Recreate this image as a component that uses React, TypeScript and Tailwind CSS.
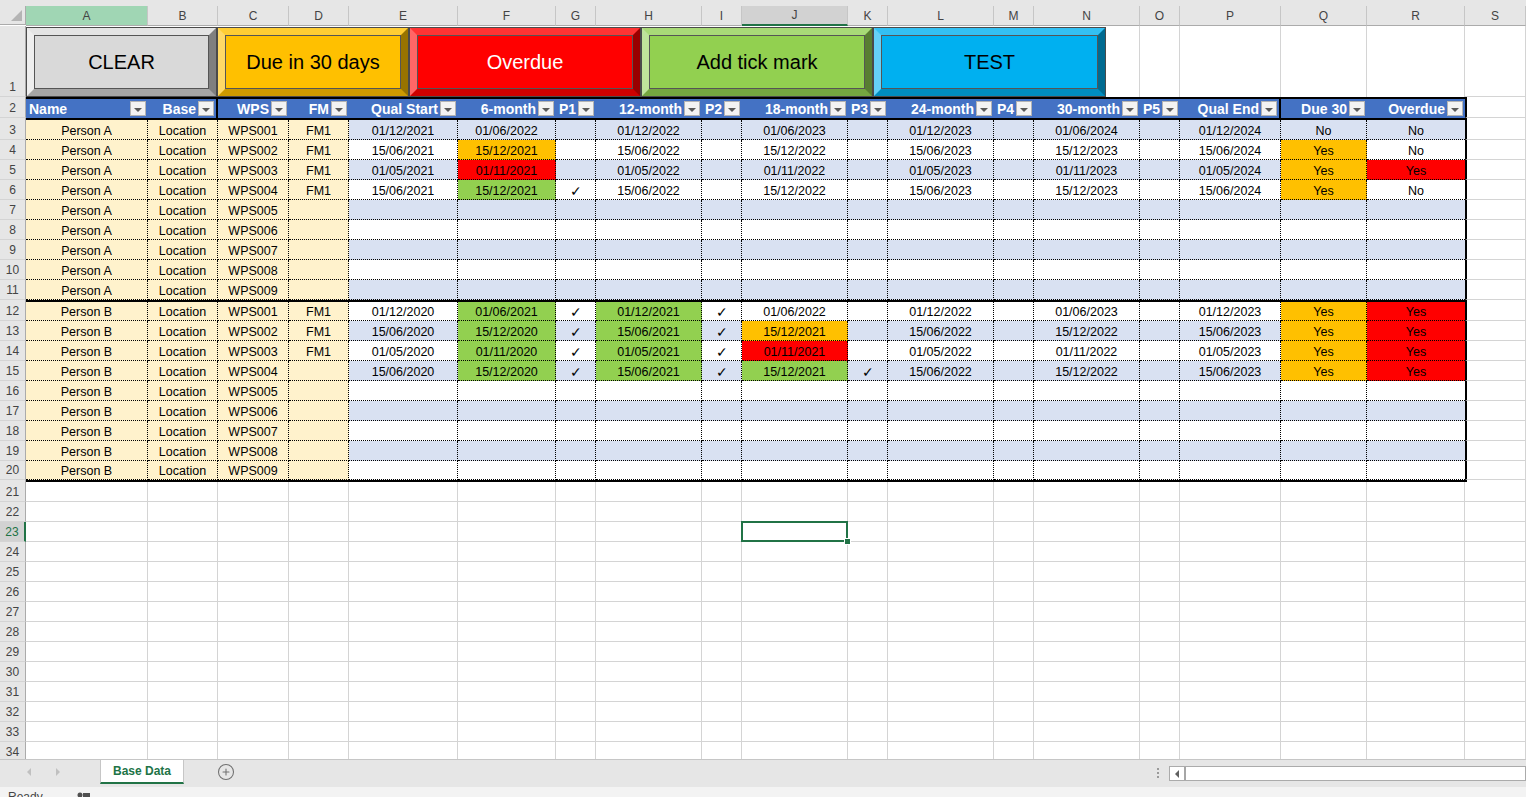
import { CirclePlus } from "lucide-react";

// Excel-style sheet: fixed column widths taken from the screenshot
const GRID =
  "grid grid-cols-[26px_122px_70px_71px_60px_109px_98px_40px_106px_40px_106px_40px_106px_40px_106px_40px_101px_86px_98px_1fr]";
const LETTERS = "ABCDEFGHIJKLMNOPQRS".split("");
const HEADERS = [
  "Name", "Base", "WPS", "FM", "Qual Start", "6-month", "P1", "12-month", "P2",
  "18-month", "P3", "24-month", "P4", "30-month", "P5", "Qual End", "Due 30", "Overdue",
];

type Fill = "a" | "r" | "g";
type Row = { n: number; v: string[]; f?: Record<number, Fill> };

const blank = (who: string, wps: string) => [who, "Location", wps, "", "", "", "", "", "", "", "", "", "", "", "", "", "", ""];

const ROWS: Row[] = [
  { n: 3, v: ["Person A", "Location", "WPS001", "FM1", "01/12/2021", "01/06/2022", "", "01/12/2022", "", "01/06/2023", "", "01/12/2023", "", "01/06/2024", "", "01/12/2024", "No", "No"] },
  { n: 4, v: ["Person A", "Location", "WPS002", "FM1", "15/06/2021", "15/12/2021", "", "15/06/2022", "", "15/12/2022", "", "15/06/2023", "", "15/12/2023", "", "15/06/2024", "Yes", "No"], f: { 5: "a", 16: "a" } },
  { n: 5, v: ["Person A", "Location", "WPS003", "FM1", "01/05/2021", "01/11/2021", "", "01/05/2022", "", "01/11/2022", "", "01/05/2023", "", "01/11/2023", "", "01/05/2024", "Yes", "Yes"], f: { 5: "r", 16: "a", 17: "r" } },
  { n: 6, v: ["Person A", "Location", "WPS004", "FM1", "15/06/2021", "15/12/2021", "✓", "15/06/2022", "", "15/12/2022", "", "15/06/2023", "", "15/12/2023", "", "15/06/2024", "Yes", "No"], f: { 5: "g", 16: "a" } },
  { n: 7, v: blank("Person A", "WPS005") },
  { n: 8, v: blank("Person A", "WPS006") },
  { n: 9, v: blank("Person A", "WPS007") },
  { n: 10, v: blank("Person A", "WPS008") },
  { n: 11, v: blank("Person A", "WPS009") },
];

const ROWS_B: Row[] = [
  { n: 12, v: ["Person B", "Location", "WPS001", "FM1", "01/12/2020", "01/06/2021", "✓", "01/12/2021", "✓", "01/06/2022", "", "01/12/2022", "", "01/06/2023", "", "01/12/2023", "Yes", "Yes"], f: { 5: "g", 7: "g", 16: "a", 17: "r" } },
  { n: 13, v: ["Person B", "Location", "WPS002", "FM1", "15/06/2020", "15/12/2020", "✓", "15/06/2021", "✓", "15/12/2021", "", "15/06/2022", "", "15/12/2022", "", "15/06/2023", "Yes", "Yes"], f: { 5: "g", 7: "g", 9: "a", 16: "a", 17: "r" } },
  { n: 14, v: ["Person B", "Location", "WPS003", "FM1", "01/05/2020", "01/11/2020", "✓", "01/05/2021", "✓", "01/11/2021", "", "01/05/2022", "", "01/11/2022", "", "01/05/2023", "Yes", "Yes"], f: { 5: "g", 7: "g", 9: "r", 16: "a", 17: "r" } },
  { n: 15, v: ["Person B", "Location", "WPS004", "", "15/06/2020", "15/12/2020", "✓", "15/06/2021", "✓", "15/12/2021", "✓", "15/06/2022", "", "15/12/2022", "", "15/06/2023", "Yes", "Yes"], f: { 5: "g", 7: "g", 9: "g", 16: "a", 17: "r" } },
  { n: 16, v: blank("Person B", "WPS005") },
  { n: 17, v: blank("Person B", "WPS006") },
  { n: 18, v: blank("Person B", "WPS007") },
  { n: 19, v: blank("Person B", "WPS008") },
  { n: 20, v: blank("Person B", "WPS009") },
];

function RowHead({ n, tall = "h-[20px]" }: { n: number; tall?: string }) {
  const active = n === 23;
  return (
    <div
      className={`${tall} flex items-end justify-center pb-[2px] text-[12px] leading-[14px] border-b border-b-[#d4d4d4] ${
        active ? "bg-[#d2d2d2] text-[#217346] border-r-2 border-r-[#217346]" : "bg-[#e6e6e6] text-[#444] border-r border-r-[#ababab]"
      }`}
    >
      {n}
    </div>
  );
}

function Rule() {
  return (
    <div className={GRID}>
      <div className="h-[2px] bg-[#e6e6e6] border-r border-r-[#ababab]" />
      <div className="col-span-18 bg-black" />
      <div className="bg-white border-l-2 border-l-black border-r border-r-[#d4d4d4]" />
    </div>
  );
}

function Drop() {
  return (
    <span className="w-[16px] h-[15px] shrink-0 bg-[#f3f3f3] border border-[#b4b4b4] flex items-center justify-center">
      <span className="w-0 h-0 mt-[2px] border-x-[4px] border-x-transparent border-t-[4px] border-t-[#595959]" />
    </span>
  );
}

type BevelProps = { w: string; face: string; bevel: string; text: string; label: string };

function Bevel({ w, face, bevel, text, label }: BevelProps) {
  return (
    <div className={`${w} h-[70px] border border-[#4a4a4a] flex`}>
      <div className={`flex-1 flex border-[7px] ${bevel}`}>
        <div className={`flex-1 flex items-center justify-center border border-[#555] text-[20px] ${face} ${text}`}>{label}</div>
      </div>
    </div>
  );
}

function DataRow({ r }: { r: Row }) {
  const band = r.n % 2 === 1;
  const tall = r.n === 12 || r.n === 20 ? "h-[19px]" : "h-[20px]";
  return (
    <div className={GRID}>
      <RowHead n={r.n} tall={tall} />
      {r.v.map((v, i) => {
        const f = r.f?.[i];
        const bg =
          i < 4
            ? "bg-[#fff2cc]"
            : f === "a"
            ? "bg-[#ffc000]"
            : f === "r"
            ? "bg-[#ff0000]"
            : f === "g"
            ? "bg-[#92d050]"
            : band
            ? "bg-[#d9e1f2]"
            : "bg-white";
        const edge = i === 17 ? "border-b" : "border-r border-b";
        const type = v === "✓" ? "text-[14px] font-['DejaVu_Sans',sans-serif] font-light" : "text-[12.5px]";
        return (
          <div
            key={i}
            className={`${bg} ${edge} ${type} leading-[15px] pt-[3px] overflow-hidden border-dotted border-black flex items-center justify-center text-black`}
          >
            {v}
          </div>
        );
      })}
      <div className="bg-white border-l-2 border-l-black border-r border-b border-r-[#d4d4d4] border-b-[#d4d4d4]" />
    </div>
  );
}

function EmptyRow({ n }: { n: number }) {
  return (
    <div className={GRID}>
      <RowHead n={n} />
      {LETTERS.map((L, i) => (
        <div key={L} className={`bg-white border-r border-b border-[#d4d4d4] ${n === 23 && i === 9 ? "relative" : ""}`}>
          {n === 23 && i === 9 && (
            <>
              <div className="absolute -inset-[1px] z-10 border-2 border-[#217346]" />
              <div className="absolute -right-[4px] -bottom-[4px] z-20 w-[7px] h-[7px] bg-[#217346] border border-white" />
            </>
          )}
        </div>
      ))}
    </div>
  );
}

export default function App() {
  const empties = Array.from({ length: 14 }, (_, k) => 21 + k);
  return (
    <div className="h-[797px] w-full overflow-hidden flex flex-col bg-white font-['Liberation_Sans',Arial,sans-serif]">
      {/* ── Sheet ── */}
      <div className="h-[759px] overflow-hidden">
        <div className="h-[6px] bg-[#e6e6e6]" />

        {/* column letters */}
        <div className={GRID}>
          <div className="h-[19px] bg-[#e6e6e6] border-r border-b border-[#ababab] flex items-end justify-end p-[3px]">
            <span className="w-0 h-0 border-b-[11px] border-b-[#b4b4b4] border-l-[11px] border-l-transparent" />
          </div>
          {LETTERS.map((L) => (
            <div
              key={L}
              className={`flex items-center justify-center text-[12px] text-[#444] border-r border-r-[#c6c6c6] ${
                L === "A"
                  ? "bg-[#a0d6b4] border-b border-b-[#ababab]"
                  : L === "J"
                  ? "bg-[#d2d2d2] border-b-2 border-b-[#217346]"
                  : "bg-[#e6e6e6] border-b border-b-[#ababab]"
              }`}
            >
              {L}
            </div>
          ))}
        </div>

        {/* row 1 : macro buttons */}
        <div className={GRID}>
          <RowHead n={1} tall="h-[71px]" />
          <div className="col-span-14 bg-white border-r border-r-[#d4d4d4] flex items-start pt-[1px]">
            <Bevel
              w="w-[191px]"
              face="bg-[#d9d9d9]"
              bevel="border-t-[#e4e4e4] border-l-[#eeeeee] border-r-[#7f7f7f] border-b-[#a5a5a5]"
              text="text-black"
              label="CLEAR"
            />
            <Bevel
              w="w-[192px]"
              face="bg-[#ffc000]"
              bevel="border-t-[#ffcd33] border-l-[#ffd966] border-r-[#977300] border-b-[#cc9a00]"
              text="text-black"
              label="Due in 30 days"
            />
            <Bevel
              w="w-[232px]"
              face="bg-[#ff0000]"
              bevel="border-t-[#ff3333] border-l-[#ff6666] border-r-[#990000] border-b-[#cc0000]"
              text="text-white"
              label="Overdue"
            />
            <Bevel
              w="w-[232px]"
              face="bg-[#92d050]"
              bevel="border-t-[#a8da77] border-l-[#bee39b] border-r-[#587d31] border-b-[#74a640]"
              text="text-black"
              label="Add tick mark"
            />
            <Bevel
              w="w-[233px]"
              face="bg-[#00b0f0]"
              bevel="border-t-[#33c0f3] border-l-[#66d0f6] border-r-[#006a90] border-b-[#008dc0]"
              text="text-black"
              label="TEST"
            />
          </div>
          <div className="bg-white border-r border-r-[#d4d4d4]" />
          <div className="bg-white border-r border-r-[#d4d4d4]" />
          <div className="bg-white border-r border-r-[#d4d4d4]" />
          <div className="bg-white border-r border-r-[#d4d4d4]" />
          <div className="bg-white border-r border-b border-[#d4d4d4]" />
        </div>

        <Rule />

        {/* row 2 : table header */}
        <div className={GRID}>
          <RowHead n={2} tall="h-[19px]" />
          {HEADERS.map((h, i) => (
            <div
              key={h}
              className={`bg-[#4472c4] flex items-center gap-[2px] pl-[3px] pr-[2px] text-[14px] leading-[16px] font-bold text-white whitespace-nowrap overflow-hidden ${
                i === 0 ? "justify-between" : "justify-end"
              } ${i === 1 || i === 15 ? "border-r-2 border-r-black" : ""}`}
            >
              {h}
              <Drop />
            </div>
          ))}
          <div className="bg-white border-l-2 border-l-black border-r border-b border-r-[#d4d4d4] border-b-[#d4d4d4]" />
        </div>

        <Rule />
        {ROWS.map((r) => (
          <DataRow key={r.n} r={r} />
        ))}
        <Rule />
        {ROWS_B.map((r) => (
          <DataRow key={r.n} r={r} />
        ))}
        <Rule />
        {empties.map((n) => (
          <EmptyRow key={n} n={n} />
        ))}
      </div>

      {/* ── Sheet tabs ── */}
      <div className="h-[28px] shrink-0 bg-[#e6e6e6] border-t border-t-[#c6c6c6] flex items-start">
        <div className="w-[100px] h-[24px] flex items-center pl-[27px] gap-[25px]">
          <span className="w-0 h-0 border-y-[4px] border-y-transparent border-r-[4px] border-r-[#c0c0c0]" />
          <span className="w-0 h-0 border-y-[4px] border-y-transparent border-l-[4px] border-l-[#c0c0c0]" />
        </div>
        <div className="w-[84px] h-[24px] bg-white border-x border-x-[#c6c6c6] border-b-2 border-b-[#217346] flex items-center justify-center text-[12px] font-bold text-[#217346]">
          Base Data
        </div>
        <div className="h-[24px] flex items-center pl-[33px]">
          <CirclePlus size={18} strokeWidth={1.4} className="text-[#707070]" />
        </div>
        <div className="flex-1" />
        <div className="w-[23px] h-[24px] flex flex-col items-center justify-center gap-[2px] pt-[2px]">
          <span className="w-[2px] h-[2px] bg-[#9a9a9a]" />
          <span className="w-[2px] h-[2px] bg-[#9a9a9a]" />
          <span className="w-[2px] h-[2px] bg-[#9a9a9a]" />
        </div>
        <div className="w-[357px] h-[15px] mt-[6px] bg-white border border-[#ababab] flex items-stretch">
          <div className="w-[14px] flex items-center justify-center">
            <span className="w-0 h-0 border-y-[4px] border-y-transparent border-r-[4px] border-r-[#606060]" />
          </div>
          <div className="w-[2px] bg-[#a6a6a6]" />
        </div>
      </div>

      {/* ── Status bar ── */}
      <div className="h-[10px] shrink-0 overflow-hidden bg-[#f3f3f3] flex items-start gap-[34px] pl-[8px] pt-[3px] text-[12px] leading-[14px] text-[#444]">
        <span>Ready</span>
        <svg width="14" height="10" viewBox="0 0 14 10" className="mt-[1px]">
          <circle cx="3" cy="4" r="2.5" fill="#505050" />
          <rect x="6" y="2" width="7" height="7" fill="#505050" />
        </svg>
      </div>
    </div>
  );
}
